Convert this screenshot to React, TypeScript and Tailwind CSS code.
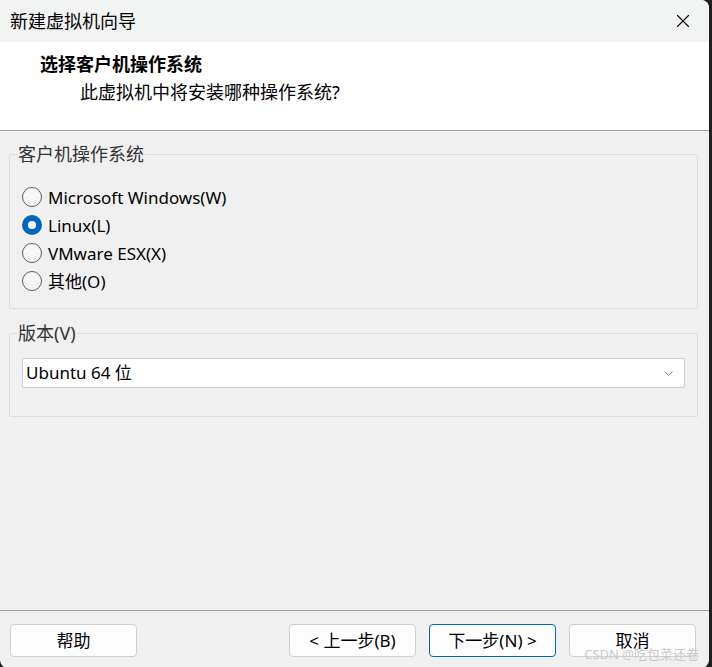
import { X, ChevronDown } from "lucide-react";

const font = { fontFamily: '"Segoe UI", "Noto Sans", "Noto Sans CJK SC", sans-serif' };

function Radio({ label, checked }: { label: string; checked?: boolean }) {
  return (
    <div className="flex items-center h-[28px]">
      {checked ? (
        <span className="w-[20px] h-[20px] rounded-full bg-[#0067c0] flex items-center justify-center shrink-0">
          <span className="w-[8px] h-[8px] rounded-full bg-white" />
        </span>
      ) : (
        <span className="w-[20px] h-[20px] rounded-full border border-[#5d5d5d] bg-[#f6f6f6] shrink-0" />
      )}
      <span className="ml-[6px] text-[17px] text-black leading-none">{label}</span>
    </div>
  );
}

function Btn({ children, primary }: { children: React.ReactNode; primary?: boolean }) {
  return (
    <button
      className={
        "w-[127px] h-[33px] rounded-[4px] bg-[#fdfdfd] text-[17px] text-black flex items-center justify-center " +
        (primary ? "border border-[#0067c0]" : "border border-[#d0d0d0]")
      }
    >
      {children}
    </button>
  );
}

export default function App() {
  return (
    <div className="w-[712px] h-[667px] bg-[#1f1f1f] overflow-hidden" style={font}>
      <div className="w-[709px] h-[668px] bg-[#f0f0f0] rounded-tr-[8px] rounded-b-[8px] overflow-hidden flex flex-col">
        {/* title bar */}
        <div className="h-[42px] bg-[#f2f3f3] flex items-center justify-between pl-[10px] pr-[15px] shrink-0">
          <span className="text-[18px] text-black">新建虚拟机向导</span>
          <X className="w-[22px] h-[22px] text-black" strokeWidth={1.2} />
        </div>

        {/* header */}
        <div className="h-[89px] bg-white border-b border-[#a0a0a0] shrink-0 pt-[9px]">
          <div className="pl-[40px] text-[18px] font-bold text-black leading-[26px]">选择客户机操作系统</div>
          <div className="pl-[80px] mt-[2px] text-[18px] text-black leading-[26px]">此虚拟机中将安装哪种操作系统?</div>
        </div>

        {/* body */}
        <div className="flex-1 px-[9px] pt-[12px]">
          <fieldset className="border border-[#dcdcdc] rounded-[2px] w-[689px] h-[166px] pl-[12px] pt-[18px] m-0">
            <legend className="ml-[-5px] px-[1px] text-[18px] text-[#333] leading-[22px]">客户机操作系统</legend>
            <Radio label="Microsoft Windows(W)" />
            <Radio label="Linux(L)" checked />
            <Radio label="VMware ESX(X)" />
            <Radio label="其他(O)" />
          </fieldset>

          <fieldset className="mt-[13px] border border-[#dcdcdc] rounded-[2px] w-[689px] h-[95px] pl-[12px] pr-[12px] pt-[14px] m-0">
            <legend className="ml-[-5px] px-[1px] text-[18px] text-[#333] leading-[22px]">版本(V)</legend>
            <div className="h-[30px] bg-white border border-[#cccccc] rounded-[2px] flex items-center justify-between pl-[3px] pr-[8px]">
              <span className="text-[17px] text-black">Ubuntu 64 位</span>
              <ChevronDown className="w-[15px] h-[15px] text-[#555]" strokeWidth={1.2} />
            </div>
          </fieldset>
        </div>

        {/* footer */}
        <div className="h-[58px] border-t border-[#a0a0a0] shrink-0 relative flex items-start pt-[13px] pl-[10px] pr-[13px]">
          <Btn>帮助</Btn>
          <div className="ml-auto flex gap-[13px]">
            <Btn>&lt; 上一步(B)</Btn>
            <Btn primary>下一步(N) &gt;</Btn>
            <Btn>取消</Btn>
          </div>
          <span className="absolute right-[10px] bottom-[4px] text-[13px] text-[#c8c8c8]">CSDN @吃包菜还卷</span>
        </div>
      </div>
    </div>
  );
}
